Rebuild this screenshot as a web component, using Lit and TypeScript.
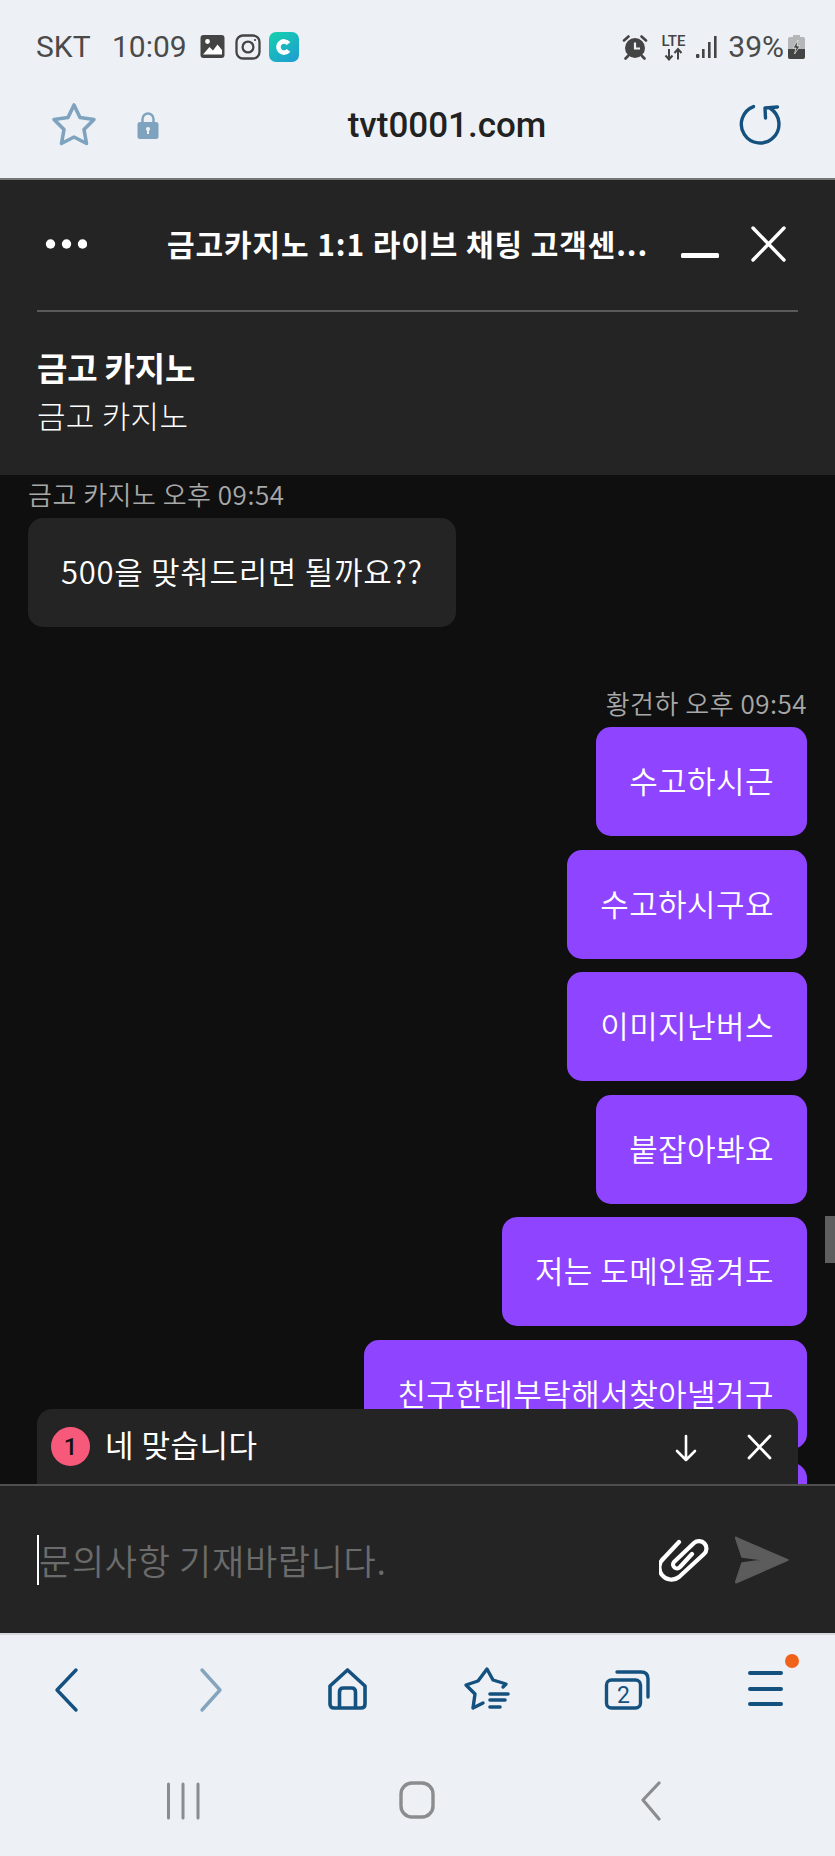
import { LitElement, html, css } from "lit";
import { customElement } from "lit/decorators.js";

const FONT = css`"Roboto", "Noto Sans CJK KR", sans-serif`;
const KR = css`"Noto Sans CJK KR", sans-serif`;

@customElement("app-root")
export class AppRoot extends LitElement {
  static styles = css`
    :host { display: block; width: 835px; height: 1856px; overflow: hidden; font-family: ${FONT}; background: #edf1f5; }
    svg { display: block; flex: none; }
    .page { display: flex; flex-direction: column; height: 1856px; }

    .status { height: 78px; flex: none; display: flex; align-items: center; padding: 15px 36px 0; color: #4a4a4a; font-size: 30px; box-sizing: border-box; }
    .carrier { width: 76px; }
    .time { margin-right: 13px; }
    .status .ic { margin-right: 10px; }
    .spacer { flex: 1; }
    .status .right { display: flex; align-items: center; margin-right: -6px; }
    .pct { margin: 0 4px 0 0; }

    .url { height: 102px; flex: none; display: flex; align-items: center; padding: 0 0 7px 51px; box-sizing: border-box; border-bottom: 2px solid #777; }
    .url .lock { margin-left: 40px; }
    .domain { flex: none; width: 580px; padding-right: 4px; box-sizing: border-box; text-align: center; font-size: 35px; font-weight: 500; color: #222; margin-top: 1px; }

    .head { flex: none; height: 295px; background: #242424; box-sizing: border-box; padding: 0 37px; color: #fff; font-family: ${KR}; }
    .bar { height: 132px; display: flex; align-items: center; border-bottom: 2px solid #5a5a5a; box-sizing: border-box; padding-bottom: 4px; }
    .title { flex: 1; min-width: 0; font-size: 30px; font-weight: 700; margin-left: 80px; white-space: nowrap; letter-spacing: 0.9px; }
    .agent { padding-top: 32px; line-height: 47px; }
    .agent b { display: block; font-weight: 700; font-size: 33px; letter-spacing: -0.2px; }
    .agent span { display: block; font-weight: 300; font-size: 31px; letter-spacing: 0.3px; }

    .chat { flex: 1; min-height: 0; background: #0f0f0f; position: relative; overflow: hidden; font-family: ${KR}; }
    .msgs { display: flex; flex-direction: column; padding: 2px 28px 0; align-items: flex-start; }
    .who { color: #a8a8a8; font-size: 26px; line-height: 34px; letter-spacing: 0.5px; font-weight: 350; }
    .bub { height: 109px; box-sizing: border-box; padding: 0 33px 4px; display: flex; align-items: center; color: #fff; font-size: 31px; border-radius: 15px; margin-top: 7px; flex: none; white-space: nowrap; letter-spacing: 0.7px; font-weight: 350; }
    .them { background: #242424; margin-bottom: 59px; }
    .who.r { align-self: flex-end; }
    .me { background: #8f45ff; align-self: flex-end; margin-top: 0; margin-bottom: 13.6px; letter-spacing: 0.45px; }
    .who.r + .me { margin-top: 7px; }
    .thumb { position: absolute; right: 0; top: 741px; width: 10px; height: 47px; background: #5f5f5f; }
    .toast { position: absolute; left: 37px; top: 934px; width: 761px; height: 75px; border-radius: 15px 15px 0 0; background: #242424; display: flex; align-items: flex-start; color: #fff; box-sizing: border-box; padding: 18px 26px 0 14px; }
    .dot { width: 39px; height: 39px; border-radius: 50%; background: #f7597a; color: #111; font: 500 24px ${FONT}; display: flex; align-items: center; justify-content: center; flex: none; }
    .tmsg { flex: 1; margin: -3px 0 0 15px; font-size: 31px; line-height: 40px; font-weight: 400; letter-spacing: 0.5px; }
    .toast svg { margin-top: 7px; }
    .toast .down { margin-right: 47px; }

    .input { flex: none; height: 151px; background: #242424; border-top: 2px solid #4e4e4e; border-bottom: 2px solid #d4d8dc; box-sizing: border-box; display: flex; align-items: center; padding: 0 46px 0 37px; font-family: ${KR}; }
    .caret { width: 2px; height: 50px; background: #fff; flex: none; }
    .ph { flex: 1; color: #6b6b6b; font-size: 35px; letter-spacing: 0.7px; font-weight: 350; }
    .input .clip { margin-right: 26px; }

    .nav { flex: none; height: 114px; position: relative; }
    .sys { flex: none; height: 107px; position: relative; }
    .abs { position: absolute; }
  `;

  render() {
    const blue = "#14517f";
    return html`<div class="page">
      <div class="status">
        <span class="carrier">SKT</span><span class="time">10:09</span>
        <svg class="ic" width="25" height="25" viewBox="0 0 25 25"><rect x="0.5" y="1" width="24" height="23" rx="3" fill="#444"/><circle cx="7.5" cy="7.5" r="2.4" fill="#fff"/><path d="M3 20.5 L9.5 13 L13 16.5 L17.5 10.5 L22 16 V20.5 Z" fill="#fff"/></svg>
        <svg class="ic" width="26" height="26" viewBox="0 0 26 26" fill="none" stroke="#444" stroke-width="2.3" style="margin-right:8px"><rect x="1.5" y="1.5" width="23" height="23" rx="6.5"/><circle cx="13" cy="13" r="5.4"/><circle cx="20" cy="6" r="1.1" fill="#444" stroke="none"/></svg>
        <svg width="30" height="30" viewBox="0 0 30 30"><defs><linearGradient id="cg" x1="0.2" y1="0" x2="0.8" y2="1"><stop offset="0" stop-color="#16cdb0"/><stop offset="1" stop-color="#1e9fd0"/></linearGradient></defs><rect width="30" height="30" rx="7" fill="url(#cg)"/><path d="M19.5 11.6 A5.6 5.6 0 1 0 19.5 18.4" fill="none" stroke="#fff" stroke-width="4.6"/></svg>
        <span class="spacer"></span>
        <div class="right">
          <svg width="26" height="26" viewBox="0 0 26 26" style="margin-right:12px"><circle cx="13" cy="14" r="10" fill="#444"/><path d="M13 8.5 V14.5 H18" fill="none" stroke="#edf1f5" stroke-width="2.2"/><path d="M2 6.5 L6.5 2.5 M24 6.5 L19.5 2.5 M6 22 L3.5 24.5 M20 22 L22.5 24.5" stroke="#444" stroke-width="2.6" stroke-linecap="round"/></svg>
          <svg width="27" height="28" viewBox="0 0 27 28" style="margin-right:9px"><text x="13.5" y="13" text-anchor="middle" fill="#444" font-family="Roboto, sans-serif" font-weight="500" font-size="15">LTE</text><path d="M9 16 V26 M5.5 22.5 L9 26.5 L12.5 22.5 M18 26.5 V16.5 M14.5 20 L18 16 L21.5 20" fill="none" stroke="#444" stroke-width="2"/></svg>
          <svg width="22" height="24" viewBox="0 0 22 24" style="margin-right:10px" fill="#444"><rect x="0" y="19" width="3.4" height="4" rx="1"/><rect x="6" y="14" width="2.6" height="9"/><rect x="12" y="7" width="2.6" height="16"/><rect x="18" y="1" width="2.6" height="22"/></svg>
          <span class="pct">39%</span>
          <svg width="17" height="24" viewBox="0 0 17 24"><path d="M5 0 H12 V2 H15 Q17 2 17 4 V22 Q17 24 15 24 H2 Q0 24 0 22 V4 Q0 2 2 2 H5 Z" fill="#b4b6b8"/><path d="M0 14 H17 V22 Q17 24 15 24 H2 Q0 24 0 22 Z" fill="#444"/><path d="M10 5 L5 13 H8 L6.5 19 L12 11 H9 Z" fill="#444" stroke="#edf1f5" stroke-width="0.7"/></svg>
        </div>
      </div>
      <div class="url">
        <svg width="46" height="46" viewBox="0 0 46 46" fill="none" stroke="#7fa3bf" stroke-width="3.6" stroke-linejoin="round"><path d="M23 3 L29 15.5 L43 17.5 L33 27.5 L35.5 41.5 L23 35 L10.5 41.5 L13 27.5 L3 17.5 L17 15.5 Z"/></svg>
        <svg class="lock" width="22" height="28" viewBox="0 0 22 28"><path d="M5.5 12 V8 A5.5 5.5 0 0 1 16.5 8 V12" fill="none" stroke="#7fa3bf" stroke-width="2.4"/><rect x="0.5" y="11" width="21" height="17" rx="2.5" fill="#7fa3bf"/><circle cx="11" cy="18" r="2.1" fill="#edf1f5"/><rect x="10" y="18" width="2" height="5" fill="#edf1f5"/></svg>
        <div class="domain">tvt0001.com</div>
        <svg class="reload" width="42" height="42" viewBox="0 0 42 42" fill="none" stroke="${blue}" stroke-width="3.4" stroke-linecap="round" stroke-linejoin="round"><path d="M14.5 2.6 A18.8 18.8 0 1 0 31.5 4.5"/><path d="M26.5 14 L26 4 L38.5 3"/></svg>
      </div>
      <div class="head">
        <div class="bar">
          <svg width="50" height="14" viewBox="0 0 50 14" fill="#fff"><circle cx="13.5" cy="8" r="4.7"/><circle cx="29.5" cy="8" r="4.7"/><circle cx="45.5" cy="8" r="4.7"/></svg>
          <div class="title">금고카지노 1:1 라이브 채팅 고객센...</div>
          <svg width="40" height="38" viewBox="0 0 40 38" style="margin-right:30px"><rect x="1" y="29" width="38" height="5" rx="1.5" fill="#fff"/></svg>
          <svg width="36" height="38" viewBox="0 0 36 38" stroke="#fff" stroke-width="3.4" stroke-linecap="round" style="margin-right:12px"><path d="M3 4 L34 36 M34 4 L3 36"/></svg>
        </div>
        <div class="agent"><b>금고 카지노</b><span>금고 카지노</span></div>
      </div>
      <div class="chat">
        <div class="msgs">
          <div class="who">금고 카지노 오후 09:54</div>
          <div class="bub them">500을 맞춰드리면 될까요??</div>
          <div class="who r">황건하 오후 09:54</div>
          ${["수고하시근", "수고하시구요", "이미지난버스", "붙잡아봐요", "저는 도메인옮겨도", "친구한테부탁해서찾아낼거구", "네"].map(
            (t) => html`<div class="bub me">${t}</div>`
          )}
        </div>
        <div class="thumb"></div>
        <div class="toast">
          <div class="dot">1</div>
          <div class="tmsg">네 맞습니다</div>
          <svg class="down" width="26" height="28" viewBox="0 0 26 28" fill="none" stroke="#fff" stroke-width="2.6" stroke-linecap="round" stroke-linejoin="round"><path d="M13 2 V26 M4 17 L13 26 L22 17"/></svg>
          <svg width="26" height="26" viewBox="0 0 26 26" stroke="#fff" stroke-width="2.8" stroke-linecap="round"><path d="M3 2 L24 24 M24 2 L3 24"/></svg>
        </div>
      </div>
      <div class="input">
        <div class="caret"></div>
        <div class="ph">문의사항 기재바랍니다.</div>
        <svg class="clip" width="50" height="44" viewBox="0 0 50 44" fill="none" stroke="#fff" stroke-width="4.2" stroke-linecap="round" stroke-linejoin="round"><path d="M20 4 L5 20 A11 11 0 0 0 20 39 L45 16 A7 7 0 0 0 35 5 L15 24 A3.5 3.5 0 0 0 21 29 L33 16"/></svg>
        <svg width="54" height="48" viewBox="0 0 54 48" fill="#5c5c5c"><path d="M2 2 Q0 0 1 3 L7 21 L30 24 L7 27 L1 45 Q0 48 3 46 L53 24 Z" stroke="#5c5c5c" stroke-width="1.5" stroke-linejoin="round"/></svg>
      </div>
      <div class="nav">
        <svg class="abs" style="left:54px;top:32px" width="26" height="46" viewBox="0 0 26 46" fill="none" stroke="${blue}" stroke-width="3.4" stroke-linecap="round" stroke-linejoin="round"><path d="M22 3 L3 23 L22 43"/></svg>
        <svg class="abs" style="left:198px;top:32px" width="26" height="46" viewBox="0 0 26 46" fill="none" stroke="#85a4bd" stroke-width="3.4" stroke-linecap="round" stroke-linejoin="round"><path d="M4 3 L22 23 L4 43"/></svg>
        <svg class="abs" style="left:326px;top:32px" width="43" height="44" viewBox="0 0 43 44" fill="none" stroke="${blue}" stroke-width="3.6" stroke-linejoin="round"><path d="M21.5 3 L39 19 V37 Q39 41 35 41 H8 Q4 41 4 37 V19 Z"/><path d="M13.5 41 V25 Q13.5 21 17.5 21 H25.5 Q29.5 21 29.5 25 V41"/></svg>
        <svg class="abs" style="left:463px;top:31px" width="48" height="48" viewBox="0 0 48 48" fill="none" stroke="${blue}" stroke-width="3.4" stroke-linecap="round" stroke-linejoin="round"><g transform="translate(2 2)"><path d="M18 35 L8 40 L10 26 L1 17 L13 13 L22 1 L28 12 L41 16 L38 19"/><path d="M25 26 H43 M25 32 H40 M25 39 H35" stroke-width="3.6"/></g></svg>
        <svg class="abs" style="left:603px;top:34px" width="48" height="44" viewBox="0 0 48 44" fill="none" stroke="${blue}" stroke-width="3.4"><rect x="3.5" y="11" width="34" height="28" rx="5"/><path d="M14 3 H38 Q45 3 45 10 V28" stroke-linecap="round"/><text x="20.5" y="34" text-anchor="middle" fill="${blue}" stroke="none" font-family="Roboto, sans-serif" font-size="23">2</text></svg>
        <svg class="abs" style="left:744px;top:30px" width="44" height="46" viewBox="0 0 44 46" fill="none" stroke="${blue}" stroke-width="4" stroke-linecap="round"><path d="M6 8 H37 M6 24 H37 M6 39 H37"/></svg>
        <div class="abs" style="left:785px;top:19px;width:14px;height:14px;border-radius:50%;background:#f0621a"></div>
      </div>
      <div class="sys">
        <svg class="abs" style="left:165px;top:33px" width="40" height="38" viewBox="0 0 40 38" fill="none" stroke="#8a8c8e" stroke-width="3" stroke-linecap="round"><path d="M3.5 2 V36 M18 2 V36 M33 2 V36"/></svg>
        <svg class="abs" style="left:398px;top:32px" width="38" height="38" viewBox="0 0 38 38" fill="none" stroke="#8a8c8e" stroke-width="3.4"><rect x="3" y="2" width="32" height="34" rx="11"/></svg>
        <svg class="abs" style="left:638px;top:32px" width="26" height="40" viewBox="0 0 26 40" fill="none" stroke="#8a8c8e" stroke-width="3.2" stroke-linecap="round" stroke-linejoin="round"><path d="M21 2 L5 19 L21 38"/></svg>
      </div>
    </div>`;
  }
}
